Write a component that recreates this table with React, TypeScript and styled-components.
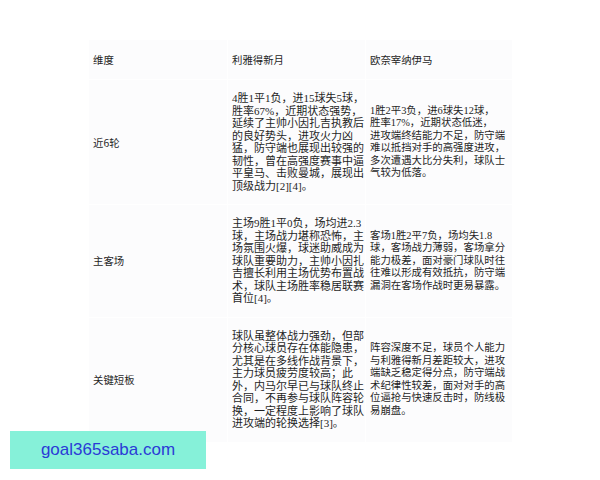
import React from 'react';
import styled, { createGlobalStyle } from 'styled-components';

const GlobalStyle = createGlobalStyle`
  html, body {
    margin: 0;
    padding: 0;
    background: #ffffff;
  }
`;

const Page = styled.div`
  padding: 40px 0 0 89px;
  width: 600px;
  height: 480px;
  box-sizing: border-box;
  overflow: hidden;
`;

const Table = styled.div`
  display: grid;
  grid-template-columns: 138px 137px 146px;
  gap: 1px;
  background: #ffffff;
  color: #1f1f1f;
`;

const HeadCell = styled.div`
  background: #fcfcfd;
  padding: 12px 0 12px 4px;
  font-family: 'Noto Sans CJK SC', 'Liberation Sans', sans-serif;
  font-size: 10.4px;
  line-height: 15px;
`;

const LabelCell = styled.div`
  background: #fcfcfd;
  padding: 0 0 0 4px;
  display: flex;
  align-items: center;
  font-family: 'Noto Sans CJK SC', 'Liberation Sans', sans-serif;
  font-size: 10.4px;
  line-height: 15px;
`;

const TextCell = styled.div<{ $size: number }>`
  background: #fcfcfd;
  padding: 12px 0 12px 4px;
  font-family: 'Liberation Serif', 'Noto Sans CJK SC', serif;
  font-size: ${(p) => p.$size}px;
  line-height: 12.5px;
  display: flex;
  flex-direction: column;
  justify-content: center;
`;

const Line = styled.span`
  display: block;
  white-space: nowrap;
`;

const Banner = styled.a`
  position: fixed;
  left: 10px;
  top: 431px;
  width: 196px;
  height: 38px;
  background: #86f1d9;
  color: #2b3bd6;
  font-family: 'Liberation Sans', Arial, sans-serif;
  font-size: 17px;
  display: flex;
  align-items: center;
  justify-content: center;
  text-decoration: none;
`;

const rows = [
  {
    label: '近6轮',
    home: [
      '4胜1平1负，进15球失5球，',
      '胜率67%，近期状态强势，',
      '延续了主帅小因扎吉执教后',
      '的良好势头，进攻火力凶',
      '猛，防守端也展现出较强的',
      '韧性，曾在高强度赛事中逼',
      '平皇马、击败曼城，展现出',
      '顶级战力[2][4]。',
    ],
    away: [
      '1胜2平3负，进6球失12球，',
      '胜率17%，近期状态低迷，',
      '进攻端终结能力不足，防守端',
      '难以抵挡对手的高强度进攻，',
      '多次遭遇大比分失利，球队士',
      '气较为低落。',
    ],
  },
  {
    label: '主客场',
    home: [
      '主场9胜1平0负，场均进2.3',
      '球，主场战力堪称恐怖，主',
      '场氛围火爆，球迷助威成为',
      '球队重要助力，主帅小因扎',
      '吉擅长利用主场优势布置战',
      '术，球队主场胜率稳居联赛',
      '首位[4]。',
    ],
    away: [
      '客场1胜2平7负，场均失1.8',
      '球，客场战力薄弱，客场拿分',
      '能力极差，面对豪门球队时往',
      '往难以形成有效抵抗，防守端',
      '漏洞在客场作战时更易暴露。',
    ],
  },
  {
    label: '关键短板',
    home: [
      '球队虽整体战力强劲，但部',
      '分核心球员存在体能隐患，',
      '尤其是在多线作战背景下，',
      '主力球员疲劳度较高；此',
      '外，内马尔早已与球队终止',
      '合同，不再参与球队阵容轮',
      '换，一定程度上影响了球队',
      '进攻端的轮换选择[3]。',
    ],
    away: [
      '阵容深度不足，球员个人能力',
      '与利雅得新月差距较大，进攻',
      '端缺乏稳定得分点，防守端战',
      '术纪律性较差，面对对手的高',
      '位逼抢与快速反击时，防线极',
      '易崩盘。',
    ],
  },
];

const App: React.FC = () => {
  return (
    <Page>
      <GlobalStyle />
      <Table>
        <HeadCell>维度</HeadCell>
        <HeadCell>利雅得新月</HeadCell>
        <HeadCell>欧奈宰纳伊马</HeadCell>
        {rows.map((row) => (
          <React.Fragment key={row.label}>
            <LabelCell>{row.label}</LabelCell>
            <TextCell $size={11}>
              {row.home.map((line) => (
                <Line key={line}>{line}</Line>
              ))}
            </TextCell>
            <TextCell $size={10.4}>
              {row.away.map((line) => (
                <Line key={line}>{line}</Line>
              ))}
            </TextCell>
          </React.Fragment>
        ))}
      </Table>
      <Banner href="#">goal365saba.com</Banner>
    </Page>
  );
};

export default App;
